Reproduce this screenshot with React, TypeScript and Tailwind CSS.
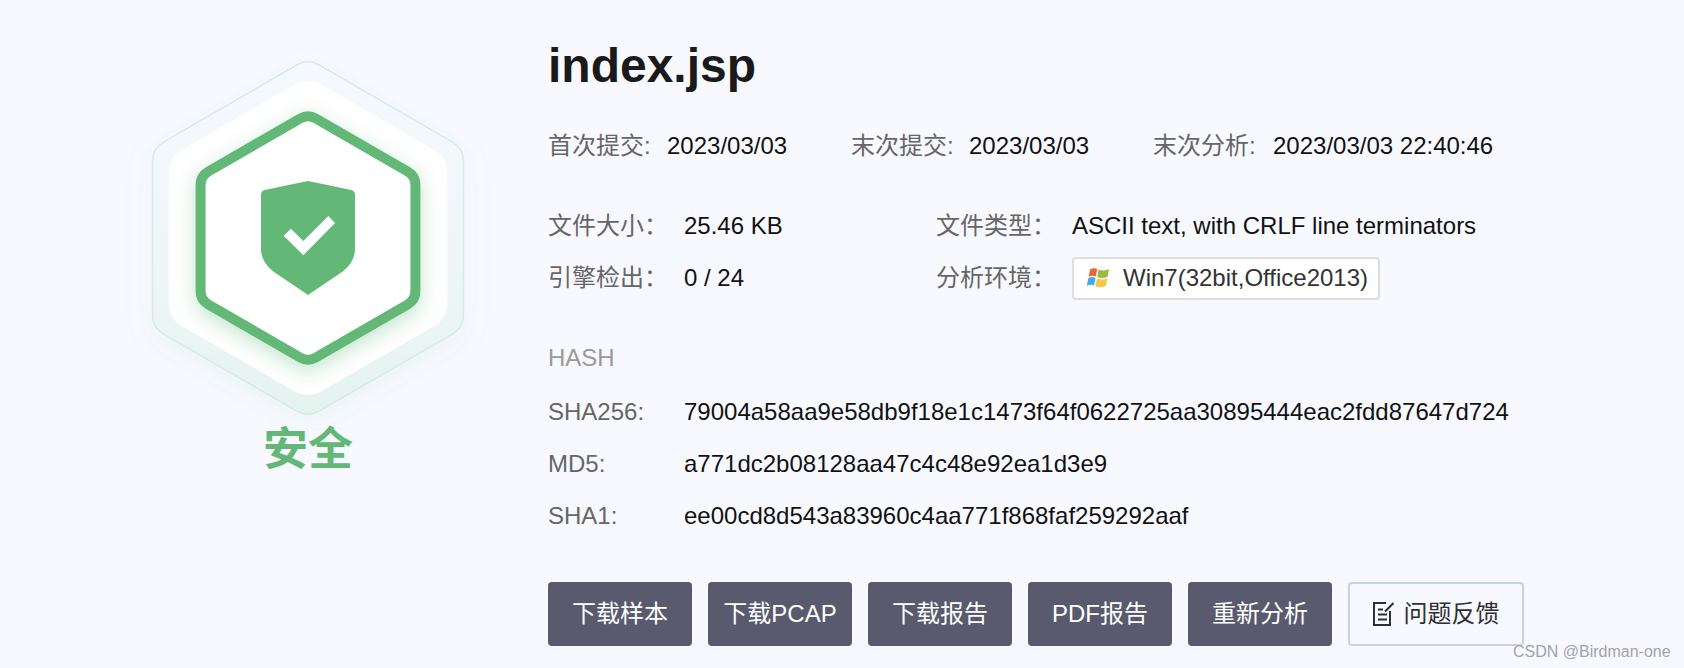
const FONT = "font-['Liberation_Sans','Noto_Sans_CJK_SC',sans-serif]";

// rounded hexagon around the badge centre, pointy side up
const hexPath = (R: number, r: number, cx = 308, cy = 238) => {
  const pts = [-90, -30, 30, 90, 150, 210].map((a) => {
    const rad = (a * Math.PI) / 180;
    return [cx + R * Math.cos(rad), cy + R * Math.sin(rad)];
  });
  let d = "";
  pts.forEach((p, i) => {
    const prev = pts[(i + 5) % 6];
    const next = pts[(i + 1) % 6];
    const toward = (q: number[]) => {
      const len = Math.hypot(q[0] - p[0], q[1] - p[1]);
      return [p[0] + ((q[0] - p[0]) * r) / len, p[1] + ((q[1] - p[1]) * r) / len];
    };
    const a = toward(prev);
    const b = toward(next);
    d += `${i === 0 ? "M" : "L"}${a[0].toFixed(1)} ${a[1].toFixed(1)} Q${p[0].toFixed(1)} ${p[1].toFixed(1)} ${b[0].toFixed(1)} ${b[1].toFixed(1)} `;
  });
  return d + "Z";
};

const HexBadge = () => (
  <svg width="336" height="375" viewBox="140 50 336 375" className="block overflow-visible">
    <defs>
      <linearGradient id="outerFill" x1="0" y1="0" x2="0" y2="1">
        <stop offset="0" stopColor="#f6f9fe" />
        <stop offset="0.55" stopColor="#eff6f8" />
        <stop offset="1" stopColor="#e5f3ef" />
      </linearGradient>
      <filter id="softGlow" x="-30%" y="-30%" width="160%" height="160%">
        <feDropShadow dx="0" dy="6" stdDeviation="10" floodColor="#62b979" floodOpacity="0.38" />
      </filter>
      <filter id="outerGlow" x="-30%" y="-30%" width="160%" height="160%">
        <feDropShadow dx="0" dy="8" stdDeviation="14" floodColor="#62b979" floodOpacity="0.08" />
      </filter>
    </defs>
    <path d={hexPath(179.5, 13)} fill="url(#outerFill)" stroke="#d7ebe5" strokeWidth="1.5" filter="url(#outerGlow)" />
    <path d={hexPath(161, 16)} fill="#ffffff" />
    <path d={hexPath(124, 9)} fill="#ffffff" stroke="#63b878" strokeWidth="10" filter="url(#softGlow)" />
    <path
      d="M308 181 L351.5 190 Q355 191 355 194.5 V249 C355 258 350 266 342 272 L308 295 L274 272 C266 266 261 258 261 249 V194.5 Q261 191 264.5 190 Z"
      fill="#63b878"
    />
    <path d="M283.7 235.7 L291 228.7 L303.3 241 L328.3 216 L335 223 L303.3 255.3 Z" fill="#ffffff" />
  </svg>
);

const WinLogo = () => (
  <svg width="24" height="22" viewBox="0 0 24 22" className="shrink-0">
    <path d="M4 2.5 C6.5 0.8 9 0.8 11.2 2 L9.8 9.6 C7.6 8.4 5 8.4 2.6 9.8 Z" fill="#e9683a" />
    <path d="M12.6 2.6 C15.4 4 18 3.9 23 2.2 L21.6 9.8 C18 11.4 14.6 11.4 11.2 10 Z" fill="#98bc3c" />
    <path d="M2.3 11.2 C4.8 9.8 7.4 9.8 9.5 11 L8.1 18.6 C5.8 17.4 3.2 17.5 0.8 18.8 Z" fill="#4aa8ea" />
    <path d="M10.9 11.5 C14.3 12.9 17.6 12.8 21.3 11.2 L20 18.8 C16.4 20.6 13 20.5 9.5 19.2 Z" fill="#f6c645" />
  </svg>
);

const NoteIcon = () => (
  <svg width="21" height="24" viewBox="0 0 21 24" fill="none" stroke="#2f2f33" strokeWidth="2" className="shrink-0">
    <path d="M13 1 H1 V23 H17 V9" />
    <path d="M20.5 1 L12 9.5" />
    <path d="M5 7.5 H10 M5 12.5 H14 M5 17.5 H14" />
  </svg>
);

const Label = ({ children, className = "w-[136px]" }: { children: React.ReactNode; className?: string }) => (
  <span className={`shrink-0 text-[#666] ${className}`}>{children}</span>
);

const DARK_BTN = "flex h-16 w-[144px] items-center justify-center rounded bg-[#5a5a6e] text-white";

export default function App() {
  return (
    <div className={`relative flex h-[668px] w-[1684px] overflow-hidden bg-[#f8f9ff] text-[24px] leading-[52px] text-[#111] ${FONT}`}>
      {/* Left: verdict */}
      <div className="flex w-[548px] shrink-0 flex-col items-center pl-[140px] pr-[72px] pt-[50px]">
        <HexBadge />
        <div className="text-[45px] font-bold leading-[50px] text-[#63b878]">安全</div>
      </div>

      {/* Right: file details */}
      <div className="flex flex-col">
        <h1 className="mt-[34px] text-[48px] font-bold leading-[64px] text-[#1a1a1a]">index.jsp</h1>

        <div className="mt-[22px] flex">
          <Label className="w-[119px]">首次提交:</Label>
          <span className="w-[184px]">2023/03/03</span>
          <Label className="w-[118px]">末次提交:</Label>
          <span className="w-[184px]">2023/03/03</span>
          <Label className="w-[120px]">末次分析:</Label>
          <span>2023/03/03 22:40:46</span>
        </div>

        <div className="mt-[28px] flex">
          <Label>文件大小：</Label>
          <span className="w-[252px]">25.46 KB</span>
          <Label>文件类型：</Label>
          <span>ASCII text, with CRLF line terminators</span>
        </div>
        <div className="flex">
          <Label>引擎检出：</Label>
          <span className="w-[252px]">0 / 24</span>
          <Label>分析环境：</Label>
          <span className="flex h-[43px] w-[308px] items-center gap-[13px] self-center rounded border-2 border-[#dedede] bg-white pl-[12px] text-[#333]">
            <WinLogo />
            Win7(32bit,Office2013)
          </span>
        </div>

        <div className="mt-[28px] text-[#999]">HASH</div>
        <div className="mt-[2px] flex">
          <Label>SHA256:</Label>
          <span>79004a58aa9e58db9f18e1c1473f64f0622725aa30895444eac2fdd87647d724</span>
        </div>
        <div className="flex">
          <Label>MD5:</Label>
          <span>a771dc2b08128aa47c4c48e92ea1d3e9</span>
        </div>
        <div className="flex">
          <Label>SHA1:</Label>
          <span>ee00cd8d543a83960c4aa771f868faf259292aaf</span>
        </div>

        <div className="mt-[40px] flex gap-4">
          <button className={DARK_BTN}>下载样本</button>
          <button className={DARK_BTN}>下载PCAP</button>
          <button className={DARK_BTN}>下载报告</button>
          <button className={DARK_BTN}>PDF报告</button>
          <button className={DARK_BTN}>重新分析</button>
          <button className="flex h-16 w-[176px] items-center justify-center gap-[10px] rounded border-2 border-[#c9d2df] text-[#2f2f33]">
            <NoteIcon />
            问题反馈
          </button>
        </div>
      </div>

      <span className="absolute left-[1513px] top-[642px] text-[16px] leading-5 text-[#a3a3a8]">CSDN @Birdman-one</span>
    </div>
  );
}
